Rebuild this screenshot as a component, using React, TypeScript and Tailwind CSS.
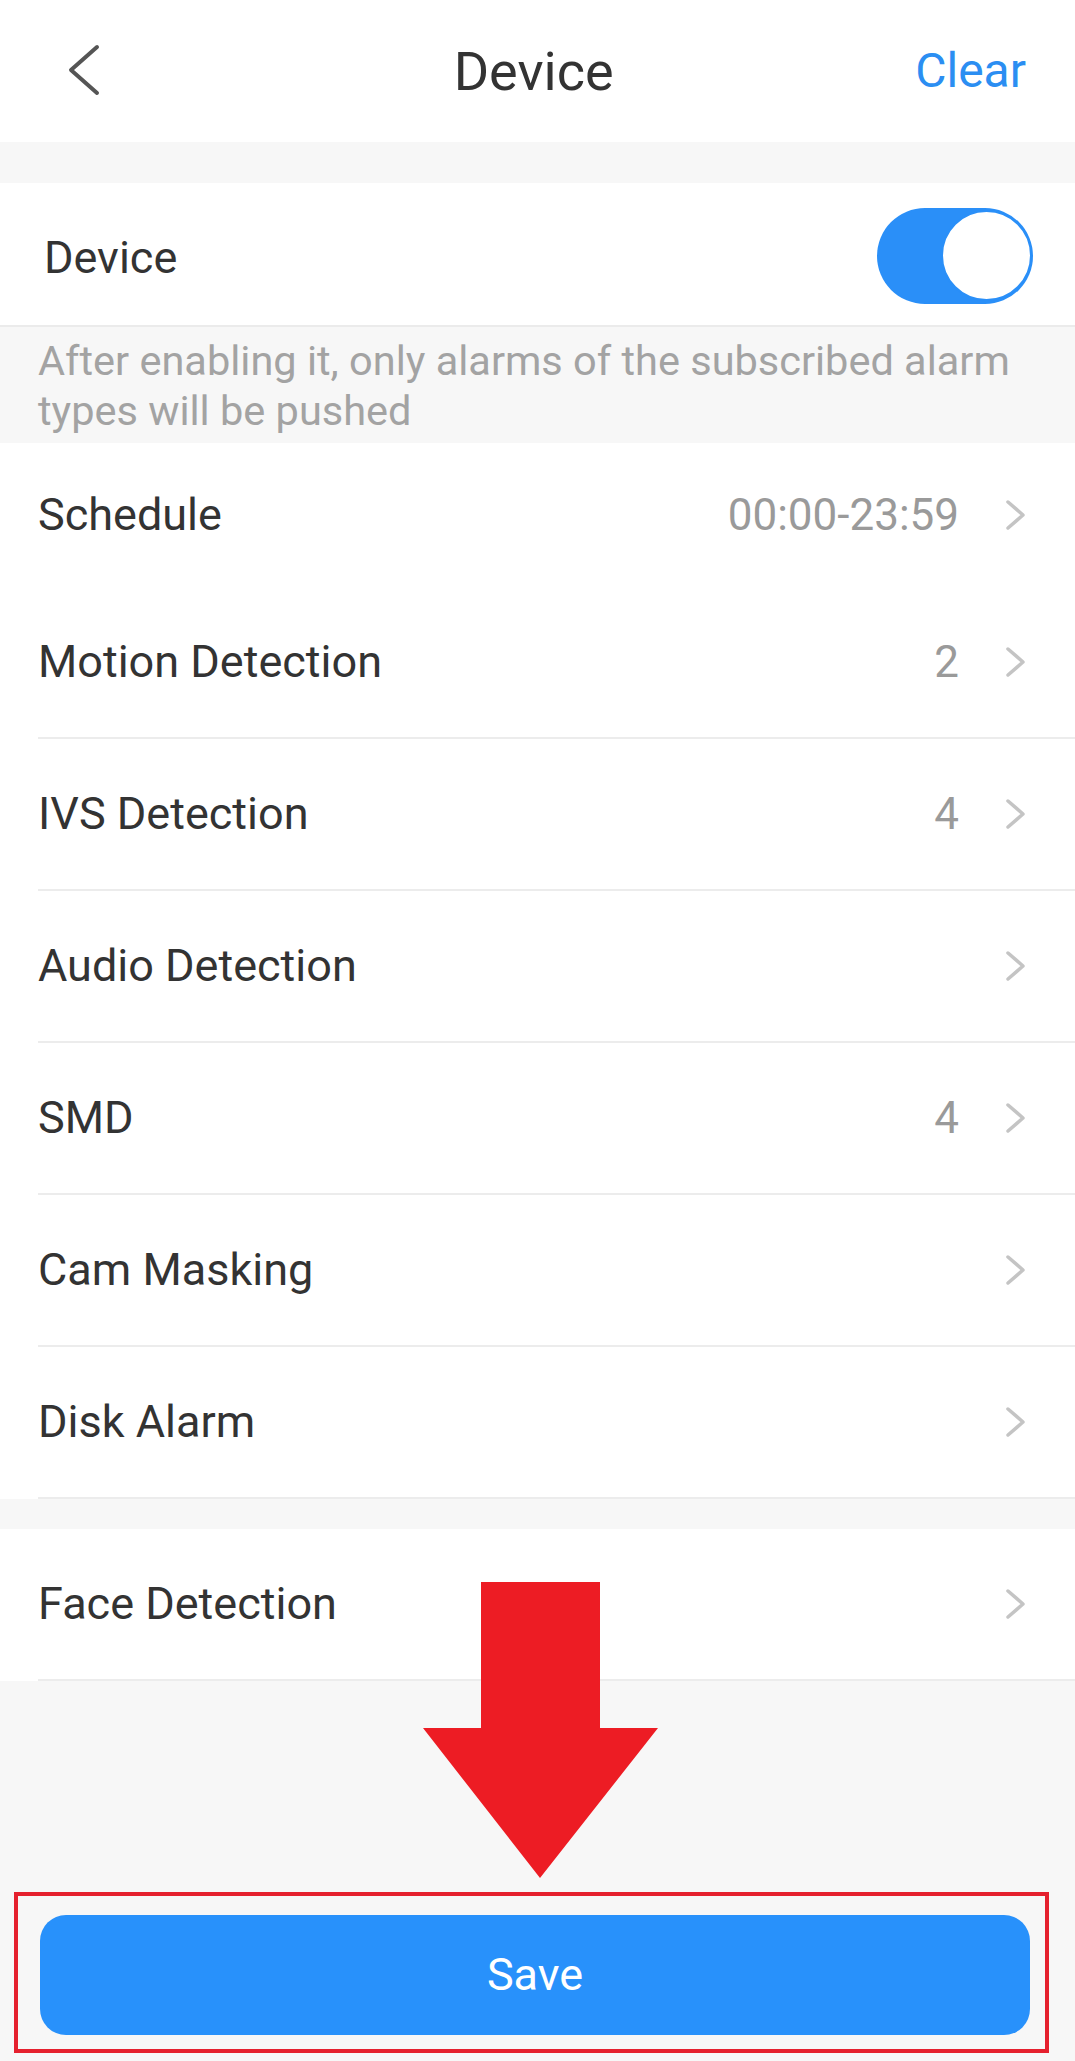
import React from "react";

type Row = { label: string; value?: string; divider?: boolean };

const rows: Row[] = [
  { label: "Schedule", value: "00:00-23:59", divider: false },
  { label: "Motion Detection", value: "2" },
  { label: "IVS Detection", value: "4" },
  { label: "Audio Detection" },
  { label: "SMD", value: "4" },
  { label: "Cam Masking" },
  { label: "Disk Alarm" },
];

const Chevron = () => (
  <svg width="22" height="32" viewBox="0 0 22 32" fill="none" className="shrink-0">
    <path d="M3 3 L18 16 L3 29" stroke="#c4c4c4" strokeWidth="3.5" strokeLinecap="round" strokeLinejoin="round" />
  </svg>
);

const ListRow = ({ label, value, divider = true }: Row) => {
  const h = divider ? "h-[152px] border-b-2 border-[#ececec]" : "h-[144px]";
  return (
    <div className="bg-white pl-[38px]">
      <div className={`flex items-center pr-[48px] ${h}`}>
        <span className="flex-1 text-[45px] text-[#333333]">{label}</span>
        {value && <span className="mr-[46px] text-[44px] text-[#9a9a9a]">{value}</span>}
        <Chevron />
      </div>
    </div>
  );
};

const App = () => {
  return (
    <div className="relative flex min-h-[2061px] w-full flex-col bg-[#f7f7f7]" style={{ fontFamily: "Roboto, 'Noto Sans', sans-serif" }}>
      <header className="flex h-[142px] items-center justify-between bg-white pl-[68px] pr-[49px]">
        <svg width="34" height="54" viewBox="0 0 34 54" fill="none">
          <path d="M29 3 L3 26 L29 49" stroke="#555555" strokeWidth="4" strokeLinecap="round" strokeLinejoin="round" />
        </svg>
        <h1 className="pl-[50px] text-[54px] text-[#333333]">Device</h1>
        <button className="text-[48px] text-[#2b8ef2]">Clear</button>
      </header>

      <div className="h-[41px]" />

      <div className="flex h-[144px] items-center justify-between border-b-2 border-[#ebebeb] bg-white pl-[44px] pr-[42px] pt-[3px]">
        <span className="mt-[4px] text-[45px] text-[#333333]">Device</span>
        <div className="flex h-[96px] w-[156px] items-center justify-end rounded-full bg-[#2a8ff8] pr-[1px]">
          <div className="h-[91px] w-[91px] rounded-full border-2 border-[#2a8ff8] bg-white" />
        </div>
      </div>

      <p className="px-[38px] pb-[7px] pt-[9px] text-[41.5px] leading-[50px] text-[#a3a3a3]">
        After enabling it, only alarms of the subscribed alarm types will be pushed
      </p>

      {rows.map((r) => (
        <ListRow key={r.label} {...r} />
      ))}

      <div className="h-[30px]" />

      <ListRow label="Face Detection" />

      <div className="mt-auto pb-[26px] pl-[40px] pr-[45px]">
        <button className="flex h-[120px] w-full items-center justify-center rounded-[26px] bg-[#2891fb] text-[45px] text-white">
          Save
        </button>
      </div>

      {/* annotation overlays */}
      <svg className="absolute left-[423px] top-[1582px]" width="235" height="296" viewBox="0 0 235 296">
        <path d="M58 0 H177 V146 H235 L117 296 L0 146 H58 Z" fill="#ed1c24" />
      </svg>
      <div className="absolute left-[14px] top-[1892px] h-[161px] w-[1035px] border-4 border-[#e5202e]" />
    </div>
  );
};

export default App;
